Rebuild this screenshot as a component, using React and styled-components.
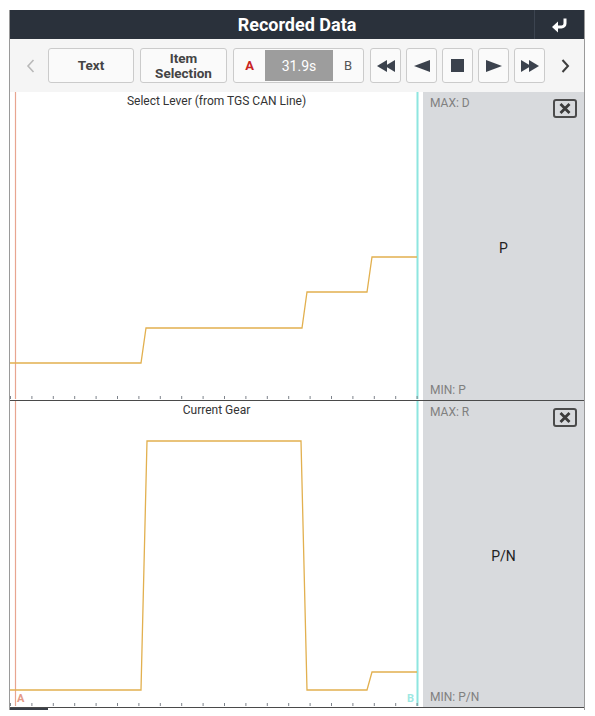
import React from "react";
import styled, { createGlobalStyle } from "styled-components";

const Global = createGlobalStyle`
  html, body { margin: 0; padding: 0; background: #fff; }
  body { font-family: Roboto, "Liberation Sans", Arial, sans-serif; }
`;

const Frame = styled.div`
  margin: 10px 0 0 9px;
  width: 576px;
  border-left: 1px solid #9a9a9a;
  border-right: 1px solid #9a9a9a;
  box-sizing: border-box;
  display: flex;
  flex-direction: column;
`;

const Header = styled.div`
  height: 29px;
  background: #2a313b;
  display: grid;
  grid-template-columns: 1fr 50px;
  align-items: stretch;
`;

const Title = styled.div`
  color: #fff;
  font-weight: 700;
  font-size: 18px;
  display: flex;
  align-items: center;
  justify-content: center;
  padding-left: 50px;
`;

const BackButton = styled.div`
  border-left: 1px solid #3c4450;
  display: flex;
  align-items: center;
  justify-content: center;
`;

const Toolbar = styled.div`
  height: 53px;
  background: #f5f5f5;
  display: flex;
  align-items: center;
  padding: 0 0 0 8px;
  gap: 6px;
  box-sizing: border-box;
`;

const Chevron = styled.div`
  width: 24px;
  display: flex;
  align-items: center;
  justify-content: center;
  margin-left: ${(p) => (p.$left ? "0" : "2px")};
`;

const Button = styled.div`
  width: ${(p) => p.$w}px;
  height: 35px;
  box-sizing: border-box;
  border: 1px solid #cbcbcb;
  border-radius: 3px;
  background: #fafafa;
  display: flex;
  align-items: center;
  justify-content: center;
  text-align: center;
  color: #444;
  font-weight: 700;
  font-size: 13.5px;
  line-height: 15px;
`;

const RangeGroup = styled.div`
  width: 131px;
  height: 35px;
  box-sizing: border-box;
  border: 1px solid #cbcbcb;
  border-radius: 3px;
  background: #fafafa;
  display: grid;
  grid-template-columns: 31px 68px 1fr;
  overflow: hidden;
`;

const Marker = styled.div`
  display: flex;
  align-items: center;
  justify-content: center;
  font-size: 13px;
  font-weight: ${(p) => (p.$red ? 700 : 400)};
  color: ${(p) => (p.$red ? "#c9231f" : "#555")};
`;

const TimeBox = styled.div`
  background: #9d9d9d;
  color: #fff;
  font-size: 14px;
  display: flex;
  align-items: center;
  justify-content: center;
  margin: 1px 0;
`;

const MediaButtons = styled.div`
  display: flex;
  gap: 5px;
`;

const MediaButton = styled.div`
  width: 31px;
  height: 35px;
  box-sizing: border-box;
  border: 1px solid #cbcbcb;
  border-radius: 3px;
  background: #fafafa;
  display: flex;
  align-items: center;
  justify-content: center;
`;

const ChartRow = styled.div`
  height: ${(p) => p.$h}px;
  display: grid;
  grid-template-columns: 1fr 161px;
  border-bottom: 1px solid #4a4a4a;
`;

const Plot = styled.div`
  position: relative;
  background: #fff;
`;

const PlotTitle = styled.div`
  position: absolute;
  top: 2px;
  left: 0;
  right: 0;
  text-align: center;
  font-size: 12px;
  color: #333;
`;

const Panel = styled.div`
  background: #d8dadd;
  display: flex;
  flex-direction: column;
  padding: 4px 7px 3px 7px;
  box-sizing: border-box;
`;

const PanelTop = styled.div`
  display: flex;
  justify-content: space-between;
  align-items: flex-start;
`;

const Limit = styled.div`
  font-size: 12px;
  color: #808080;
  line-height: 14px;
`;

const CloseBox = styled.div`
  width: 24px;
  height: 19px;
  box-sizing: border-box;
  border: 2px solid #4b4b4b;
  border-radius: 3px;
  display: flex;
  align-items: center;
  justify-content: center;
  margin-top: 3px;
`;

const Value = styled.div`
  flex: 1;
  display: flex;
  align-items: center;
  justify-content: center;
  font-size: 14px;
  font-weight: 400;
  color: #222;
  margin-top: -6px;
`;

const ScrollTrack = styled.div`
  height: 2px;
  display: flex;
`;

const ScrollThumb = styled.div`
  width: 38px;
  background: #3a3f47;
`;

const PLOT_W = 413;

function Axis({ y }) {
  const ticks = [];
  for (let x = 0; x < PLOT_W; x += 21.4) ticks.push(x);
  return (
    <g>
      {ticks.map((x, i) => (
        <line key={i} x1={x + 0.5} x2={x + 0.5} y1={y - 3} y2={y} stroke="#7d838b" strokeWidth="1" />
      ))}
    </g>
  );
}

function Trace({ points, height, markers }) {
  const d = points.map((p, i) => `${i ? "L" : "M"}${p[0]} ${p[1]}`).join(" ");
  return (
    <svg width="100%" height={height} viewBox={`0 0 ${PLOT_W} ${height}`} style={{ display: "block" }}>
      <line x1="5.5" x2="5.5" y1="0" y2={height} stroke="#e8a590" strokeWidth="1.2" />
      <line x1="407.5" x2="407.5" y1="0" y2={height} stroke="#8ee6e0" strokeWidth="2" />
      <path d={d} fill="none" stroke="#e2b04f" strokeWidth="1.3" />
      <Axis y={height} />
      {markers && (
        <g fontFamily="Roboto, Arial, sans-serif" fontSize="11" fontWeight="700">
          <text x="7" y={height - 4} fill="#e49a86">A</text>
          <text x="397" y={height - 4} fill="#9ee8e3">B</text>
        </g>
      )}
    </svg>
  );
}

const Tri = ({ dir, x = 0 }) =>
  dir === "left" ? (
    <polygon points={`${x + 10},0 ${x + 10},12 ${x},6`} />
  ) : (
    <polygon points={`${x},0 ${x},12 ${x + 10},6`} />
  );

function MediaIcon({ kind }) {
  const fill = "#3b424d";
  if (kind === "rew")
    return (
      <svg width="18" height="12" viewBox="0 0 18 12" fill={fill}>
        <Tri dir="left" x={0} />
        <Tri dir="left" x={8} />
      </svg>
    );
  if (kind === "prev")
    return (
      <svg width="16" height="12" viewBox="0 0 16 12" fill={fill}>
        <polygon points="16,0 16,12 0,6" />
      </svg>
    );
  if (kind === "stop")
    return (
      <svg width="13" height="13" viewBox="0 0 13 13" fill={fill}>
        <rect width="13" height="13" />
      </svg>
    );
  if (kind === "play")
    return (
      <svg width="16" height="12" viewBox="0 0 16 12" fill={fill}>
        <polygon points="0,0 0,12 16,6" />
      </svg>
    );
  return (
    <svg width="18" height="12" viewBox="0 0 18 12" fill={fill}>
      <Tri dir="right" x={0} />
      <Tri dir="right" x={8} />
    </svg>
  );
}

function CloseIcon() {
  return (
    <svg width="12" height="11" viewBox="0 0 12 11">
      <path d="M1.5 1 L10.5 10 M10.5 1 L1.5 10" stroke="#3b3b3b" strokeWidth="2.8" strokeLinecap="butt" />
    </svg>
  );
}

const leverPoints = [
  [0, 271], [131, 271], [136, 236], [292, 236], [297, 200], [357, 200], [362, 165], [407, 165],
];
const gearPoints = [
  [0, 289], [131, 289], [137, 40], [291, 40], [297, 289], [357, 289], [362, 271], [407, 271],
];

function Channel({ title, max, min, value, points, h, markers }) {
  return (
    <ChartRow $h={h}>
      <Plot>
        <Trace points={points} height={h - 1} markers={markers} />
        <PlotTitle>{title}</PlotTitle>
      </Plot>
      <Panel>
        <PanelTop>
          <Limit>{max}</Limit>
          <CloseBox>
            <CloseIcon />
          </CloseBox>
        </PanelTop>
        <Value>{value}</Value>
        <Limit>{min}</Limit>
      </Panel>
    </ChartRow>
  );
}

export default function App() {
  return (
    <>
      <Global />
      <Frame>
        <Header>
          <Title>Recorded Data</Title>
          <BackButton>
            <svg width="18" height="16" viewBox="0 0 18 16">
              <path d="M14 1.5 V6.5 A3.5 3.5 0 0 1 10.5 10 H6" fill="none" stroke="#fff" strokeWidth="3" />
              <polygon points="7,4.5 7,15.5 1,10" fill="#fff" />
            </svg>
          </BackButton>
        </Header>
        <Toolbar>
          <Chevron $left>
            <svg width="9" height="14" viewBox="0 0 9 14">
              <path d="M7.5 1 L2 7 L7.5 13" fill="none" stroke="#b9b9b9" strokeWidth="1.6" />
            </svg>
          </Chevron>
          <Button $w={86}>Text</Button>
          <Button $w={87}>
            Item
            <br />
            Selection
          </Button>
          <RangeGroup>
            <Marker $red>A</Marker>
            <TimeBox>31.9s</TimeBox>
            <Marker>B</Marker>
          </RangeGroup>
          <MediaButtons>
            <MediaButton><MediaIcon kind="rew" /></MediaButton>
            <MediaButton><MediaIcon kind="prev" /></MediaButton>
            <MediaButton><MediaIcon kind="stop" /></MediaButton>
            <MediaButton><MediaIcon kind="play" /></MediaButton>
            <MediaButton><MediaIcon kind="ff" /></MediaButton>
          </MediaButtons>
          <Chevron>
            <svg width="9" height="14" viewBox="0 0 9 14">
              <path d="M1.5 1 L7 7 L1.5 13" fill="none" stroke="#3e3e3e" strokeWidth="2" />
            </svg>
          </Chevron>
        </Toolbar>
        <Channel
          h={308}
          title="Select Lever (from TGS CAN Line)"
          max="MAX: D"
          min="MIN: P"
          value="P"
          points={leverPoints}
        />
        <Channel
          h={306}
          title="Current Gear"
          max="MAX: R"
          min="MIN: P/N"
          value="P/N"
          points={gearPoints}
          markers
        />
        <ScrollTrack>
          <ScrollThumb />
        </ScrollTrack>
      </Frame>
    </>
  );
}
